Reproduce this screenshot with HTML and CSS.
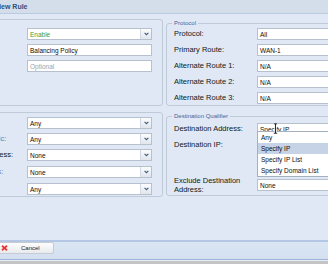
FILE: index.html
```html
<!DOCTYPE html>
<html lang="en">
<head>
    <meta charset="UTF-8">
    <meta name="viewport" content="width=device-width, initial-scale=1.0">
    <title>New Rule</title>
    <link rel="stylesheet" href="styles.css">
</head>
<body>
<div class="dialog">
    <div class="titlebar">New Rule</div>

    <div class="content">
        <!-- general -->
        <fieldset class="box general">
            <div class="row">
                <label>Status:</label>
                <div class="select green"><span class="val">Enable</span><span class="arrow"><svg width="5" height="4" viewBox="0 0 5 4"><path d="M0.6 0.8 L2.5 2.7 L4.4 0.8" fill="none" stroke="#3f5b82" stroke-width="1.1"/></svg></span></div>
            </div>
            <div class="row">
                <label>Name:</label>
                <div class="field">Balancing Policy</div>
            </div>
            <div class="row">
                <label>Description:</label>
                <div class="field placeholder">Optional</div>
            </div>
        </fieldset>

        <fieldset class="box protocol">
            <legend>Protocol</legend>
            <div class="row"><label>Protocol:</label><div class="select wide"><span class="val">All</span></div></div>
            <div class="row"><label>Primary Route:</label><div class="select wide"><span class="val">WAN-1</span></div></div>
            <div class="row"><label>Alternate Route 1:</label><div class="select wide"><span class="val">N/A</span></div></div>
            <div class="row"><label>Alternate Route 2:</label><div class="select wide"><span class="val">N/A</span></div></div>
            <div class="row"><label>Alternate Route 3:</label><div class="select wide"><span class="val">N/A</span></div></div>
        </fieldset>

        <!-- source -->
        <fieldset class="box general source">
            <div class="row">
                <label>Source:</label>
                <div class="select"><span class="val">Any</span><span class="arrow"><svg width="5" height="4" viewBox="0 0 5 4"><path d="M0.6 0.8 L2.5 2.7 L4.4 0.8" fill="none" stroke="#3f5b82" stroke-width="1.1"/></svg></span></div>
            </div>
            <div class="row">
                <label class="dim">Source Traffic:</label>
                <div class="select"><span class="val">Any</span><span class="arrow"><svg width="5" height="4" viewBox="0 0 5 4"><path d="M0.6 0.8 L2.5 2.7 L4.4 0.8" fill="none" stroke="#3f5b82" stroke-width="1.1"/></svg></span></div>
            </div>
            <div class="row loose">
                <label>Source Address:</label>
                <div class="select"><span class="val">None</span><span class="arrow"><svg width="5" height="4" viewBox="0 0 5 4"><path d="M0.6 0.8 L2.5 2.7 L4.4 0.8" fill="none" stroke="#3f5b82" stroke-width="1.1"/></svg></span></div>
            </div>
            <div class="row loose">
                <label class="dim">Source Ports:</label>
                <div class="select"><span class="val">None</span><span class="arrow"><svg width="5" height="4" viewBox="0 0 5 4"><path d="M0.6 0.8 L2.5 2.7 L4.4 0.8" fill="none" stroke="#3f5b82" stroke-width="1.1"/></svg></span></div>
            </div>
            <div class="row">
                <label>Service:</label>
                <div class="select"><span class="val">Any</span><span class="arrow"><svg width="5" height="4" viewBox="0 0 5 4"><path d="M0.6 0.8 L2.5 2.7 L4.4 0.8" fill="none" stroke="#3f5b82" stroke-width="1.1"/></svg></span></div>
            </div>
        </fieldset>

        <fieldset class="box protocol dest">
            <legend>Destination Qualifier</legend>
            <div class="row">
                <label>Destination Address:</label>
                <div class="select wide open">
                    <span class="val">Specify IP</span>
                    <svg class="ibeam" width="5" height="11" viewBox="0 0 5 11"><path d="M0.5 0.5 H4.5 M2.5 0.5 V10.5 M0.5 10.5 H4.5" fill="none" stroke="#fff" stroke-width="2"/><path d="M0.8 0.8 H4.2 M2.5 0.8 V10.2 M0.8 10.2 H4.2" fill="none" stroke="#111" stroke-width="0.9"/></svg>
                    <ul class="list">
                        <li>Any</li>
                        <li class="hl">Specify IP</li>
                        <li>Specify IP List</li>
                        <li>Specify Domain List</li>
                    </ul>
                </div>
            </div>
            <div class="row ip">
                <label>Destination IP:</label>
                <div class="stack">
                    <div class="field wide"></div>
                    <div class="field wide"></div>
                </div>
            </div>
            <div class="row exclude">
                <label>Exclude Destination Address:</label>
                <div class="select wide"><span class="val">None</span></div>
            </div>
        </fieldset>
    </div>

    <div class="footer">
        <button class="btn save">Save</button>
        <button class="btn"><svg width="7" height="6" viewBox="0 0 7 6"><path d="M1 0.8 L6 5.2 M6 0.8 L1 5.2" stroke="#f3a3a3" stroke-width="2.4"/><path d="M1 0.8 L6 5.2 M6 0.8 L1 5.2" stroke="#e02b2b" stroke-width="1.3"/></svg>Cancel</button>
    </div>
</div>
</body>
</html>
```

FILE: styles.css
```css
* {
    box-sizing: border-box;
}
body {
    margin: 0;
    background: #c4c4c4;
    font-family: "Liberation Sans", Arial, sans-serif;
    font-size: 7.5px;
    color: #111820;
    overflow: hidden;
}
.dialog {
    width: 440px;
    margin-left: -53px;
    background: #dfe8f4;
    border-bottom: 1px solid #e7eef8;
}
.titlebar {
    height: 14px;
    line-height: 13px;
    padding-left: 49px;
    background: #d4deea;
    border-bottom: 1px solid #b9cbe2;
    color: #2b4f82;
    font-size: 7px;
    font-weight: bold;
}
.content {
    height: 226px;
    padding: 5px 4px 0;
    display: grid;
    grid-template-columns: 212px 1fr;
    grid-template-rows: 87px auto;
    column-gap: 3px;
    row-gap: 6px;
}
fieldset.box {
    margin: 0;
    min-width: 0;
    border: 1px solid #bfcad8;
    border-radius: 3px;
}
legend {
    font-size: 6px;
    line-height: 9px;
    color: #3f65a3;
    padding: 0 2px;
    margin-left: -2px;
}
.general {
    padding: 8px 9px 0 6px;
}
.source {
    margin-top: 4px;
    padding-top: 4px;
    align-self: start;
    height: 85px;
    border-bottom: none;
    border-bottom-left-radius: 0;
    border-bottom-right-radius: 0;
}
.protocol {
    padding: 0 0 1px 7px;
}
.dest {
    padding-top: 2px;
    align-self: start;
}
.row {
    display: flex;
    align-items: center;
    height: 12px;
    margin-bottom: 4px;
}
.row:last-child {
    margin-bottom: 0;
}
.row.loose {
    margin-bottom: 5px;
}
.row label {
    flex: none;
    line-height: 12px;
    white-space: nowrap;
}
.general .row label {
    width: 69px;
}
.protocol .row label {
    width: 83px;
}
.row label.dim {
    color: #5f80b6;
}
.select,
.field {
    position: relative;
    display: flex;
    align-items: center;
    width: 125px;
    height: 12px;
    border: 1px solid #b7c1cd;
    background: #fff;
    color: #0d0d0d;
    font-size: 6.5px;
}
.field {
    padding-left: 2px;
}
.select .val {
    flex: 1;
    padding-left: 2px;
    white-space: nowrap;
}
.select .arrow {
    flex: none;
    width: 11px;
    height: 100%;
    border-left: 1px solid #d3d9e1;
    background: linear-gradient(#fbfcfd, #e1e6ed);
    display: flex;
    align-items: center;
    justify-content: center;
}
.wide {
    width: 120px;
}
.green .val {
    color: #3f9a3c;
}
.placeholder {
    color: #a3a3a3;
}
.row.ip {
    height: 33px;
    align-items: flex-start;
}
.stack {
    display: flex;
    flex-direction: column;
    gap: 4px;
}
.row.exclude label {
    width: 83px;
    white-space: normal;
    line-height: 9px;
}
.row.exclude {
    height: 18px;
}
.list {
    position: absolute;
    z-index: 2;
    top: 7px;
    left: -1px;
    width: 121px;
    margin: 0;
    padding: 0;
    list-style: none;
    background: #fff;
    border: 1px solid #a5b0bf;
}
.list li {
    height: 11px;
    line-height: 11px;
    padding-left: 3px;
    white-space: nowrap;
}
.list li.hl {
    background: #c6d3e6;
}
.ibeam {
    position: absolute;
    z-index: 3;
    left: 15px;
    top: -1px;
}
.footer {
    height: 20px;
    display: flex;
    gap: 4px;
    align-items: flex-start;
    padding-left: 7px;
    background: linear-gradient(#dbe6f4, #d4e0f0);
    border-top: 2px solid #b3c7e5;
    border-bottom: 1px solid #9cb4d9;
}
.btn {
    height: 12px;
    display: flex;
    align-items: center;
    padding: 0 13px 0 8px;
    border: 1px solid #c6cbd3;
    border-radius: 2px;
    background: linear-gradient(#fdfdfd, #e8eaee);
    font-family: "Liberation Sans", Arial, sans-serif;
    font-size: 6px;
    color: #222;
}
.btn svg {
    margin-right: 13px;
}
.btn.save {
    width: 34px;
    padding: 0 6px;
}
```
